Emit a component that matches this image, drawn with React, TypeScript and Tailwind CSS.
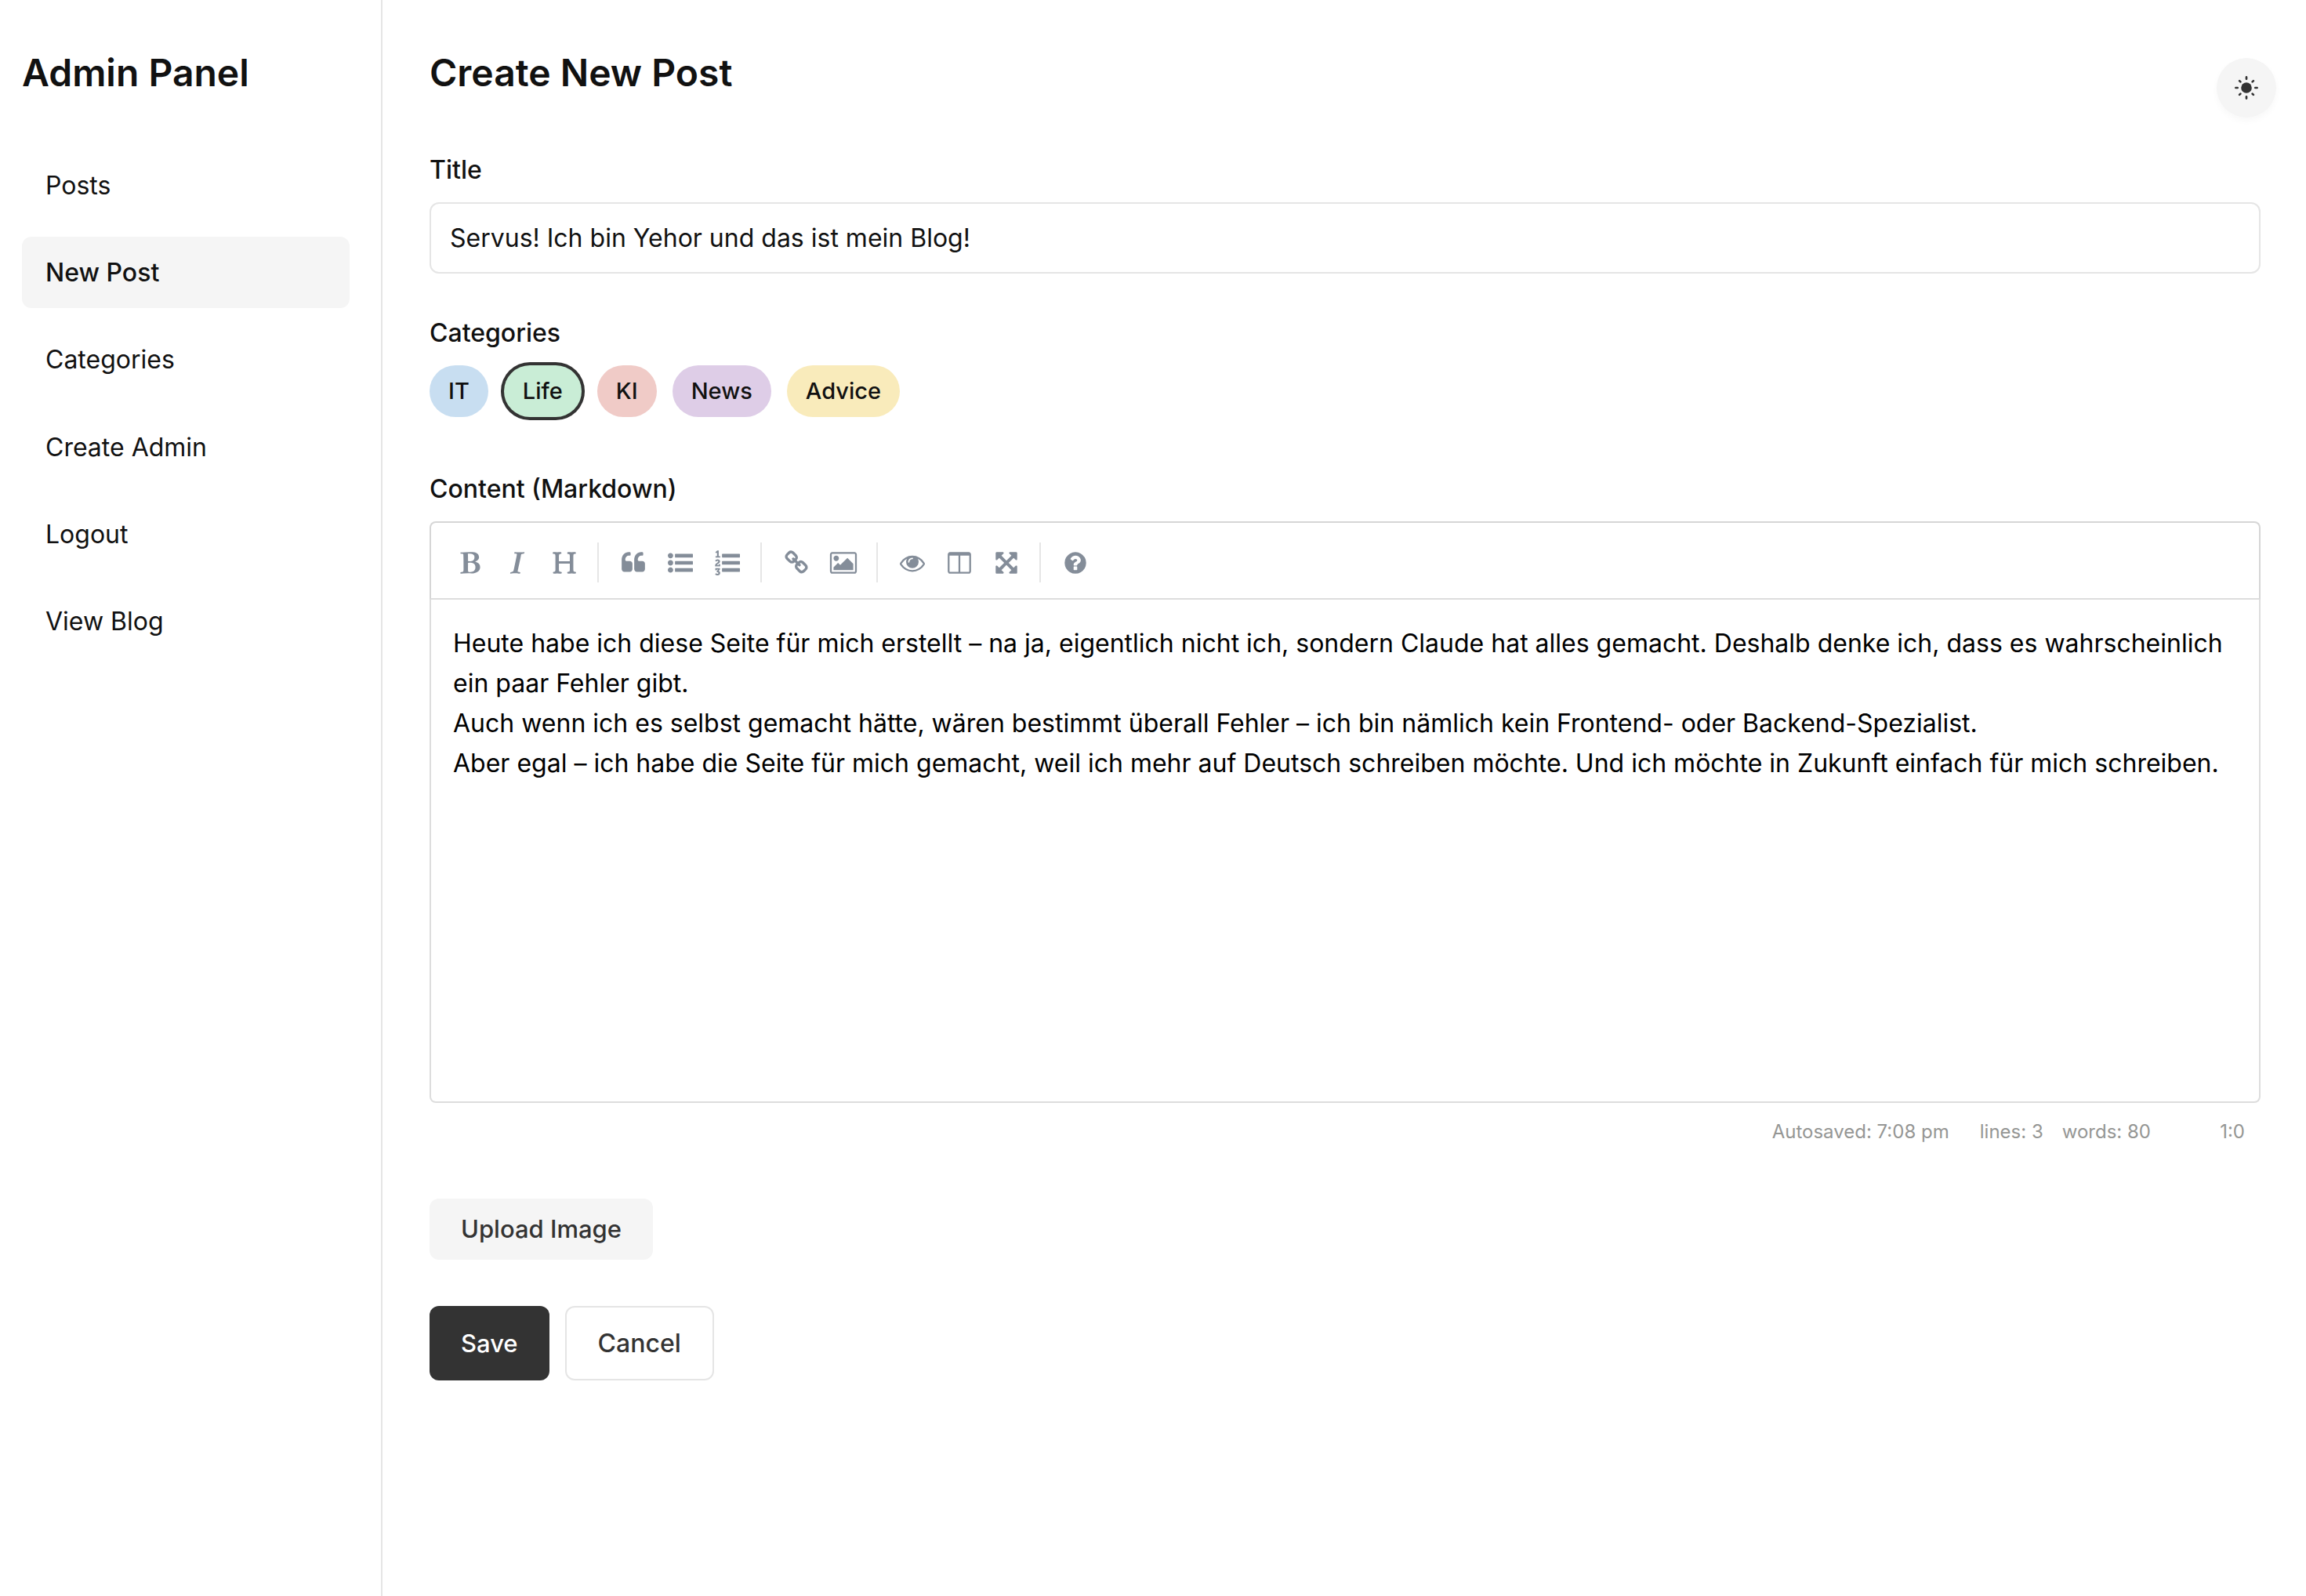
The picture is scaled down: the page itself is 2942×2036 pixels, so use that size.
import { useState, type ReactNode } from "react";

const navItems = ["Posts", "New Post", "Categories", "Create Admin", "Logout", "View Blog"];

const categories = [
  { name: "IT", color: "bg-[#c8def1]" },
  { name: "Life", color: "bg-[#c9edd6]" },
  { name: "KI", color: "bg-[#f0cbc7]" },
  { name: "News", color: "bg-[#decde7]" },
  { name: "Advice", color: "bg-[#f9ebbb]" },
];

const initialContent = [
  "Heute habe ich diese Seite für mich erstellt – na ja, eigentlich nicht ich, sondern Claude hat alles gemacht. Deshalb denke ich, dass es wahrscheinlich ein paar Fehler gibt.",
  "Auch wenn ich es selbst gemacht hätte, wären bestimmt überall Fehler – ich bin nämlich kein Frontend- oder Backend-Spezialist.",
  "Aber egal – ich habe die Seite für mich gemacht, weil ich mehr auf Deutsch schreiben möchte. Und ich möchte in Zukunft einfach für mich schreiben.",
].join("\n");

const icons = {
  bold: "M747 1521q74 32 140 32 376 0 376-335 0-114-41-180-27-44-61.5-74t-67.5-46.5-80.5-25-84-10.5-94.5-2q-73 0-101 10 0 53-.5 159t-.5 158q0 8-1 67.5t-.5 96.5 4.5 83.5 12 66.5zm-14-746q42 7 109 7 82 0 143-13t110-44.5 74.5-89.5 25.5-142q0-70-29-122.5t-79-82-108-43.5-124-14q-50 0-130 13 0 50 4 151t4 152q0 27-.5 80t-.5 79q0 46 1 69zm-541 889l2-94q15-4 85-16t106-27q7-12 12.5-27t8.5-33.5 5.5-32.5 3-37.5.5-34v-65.5q0-982-22-1025-4-8-22-14.5t-44.5-11-49.5-7-48.5-4.5-30.5-3l-4-83q98-2 340-11.5t373-9.5q23 0 68.5.5t67.5.5q70 0 136.5 13t128.5 42 108 71 74 104.5 28 137.5q0 52-16.5 95.5t-39 72-64.5 57.5-73 45-84 40q154 35 256.5 134t102.5 248q0 100-35 179.5t-93.5 130.5-138 85.5-163.5 48.5-176 14q-44 0-132-3t-132-3q-106 0-307 11t-231 12z",
  italic: "M384 1662l17-85q6-2 81.5-21.5t111.5-37.5q28-35 41-101 1-7 62-289t114-543.5 52-296.5v-25q-24-13-54.5-18.5t-69.5-8-58-5.5l19-103q33 2 120 6.5t149.5 7 120.5 2.5q48 0 98.5-2.5t121-7 98.5-6.5q-5 39-19 89-30 10-101.5 28.5t-108.5 33.5q-8 19-14 42.5t-9 40-7.5 45.5-6.5 42q-27 148-87.5 419.5t-77.5 355.5q-2 9-13 58t-20 90-16 83.5-6 57.5l1 18q17 4 185 31-3 44-16 99-11 0-32.5 1.5t-32.5 1.5q-29 0-87-10t-86-10q-138-2-206-2-51 0-143 9t-121 11z",
  heading: "M1682 1664q-44 0-132.5-3.5t-133.5-3.5q-44 0-132 3.5t-132 3.5q-24 0-37-20.5t-13-45.5q0-31 17-46t39-17 51-7 45-15q33-21 33-140l-1-391q0-21-1-31-13-4-50-4h-675q-38 0-51 4-1 10-1 31l-1 371q0 142 37 164 16 10 48 13t57 3.5 45 15 20 45.5q0 26-12.5 48t-36.5 22q-47 0-139.5-3.5t-138.5-3.5q-43 0-128 3.5t-127 3.5q-23 0-35.5-21t-12.5-45q0-30 15.5-45t36-17.5 47.5-7.5 42-15q33-23 33-143l-1-57v-813q0-3 .5-26t0-36.5-1.5-38.5-3.5-42-6.5-36.5-11-31.5-16-18q-15-10-45-12t-53-2-41-14-18-45q0-26 12-48t36-22q46 0 138.5 3.5t138.5 3.5q42 0 126.5-3.5t126.5-3.5q25 0 37.5 22t12.5 48q0 30-17 43.5t-38.5 14.5-49.5 4-43 13q-35 21-35 160l1 320q0 21 1 32 13 3 39 3h699q25 0 38-3 1-11 1-32l1-320q0-139-35-160-18-11-58.5-12.5t-66-13-25.5-49.5q0-26 12.5-48t37.5-22q44 0 132 3.5t132 3.5q43 0 129-3.5t129-3.5q25 0 37.5 22t12.5 48q0 30-17.5 44t-40 14.5-51.5 3-44 12.5q-35 23-35 161l1 943q0 119 34 140 16 10 46 13.5t53.5 4.5 41.5 15.5 18 44.5q0 26-12 48t-36 22z",
  quote: "M832 960v384q0 80-56 136t-136 56h-384q-80 0-136-56t-56-136v-704q0-104 40.5-198.5t109.5-163.5 163.5-109.5 198.5-40.5h64q26 0 45 19t19 45v128q0 26-19 45t-45 19h-64q-106 0-181 75t-75 181v32q0 40 28 68t68 28h224q80 0 136 56t56 136zm896 0v384q0 80-56 136t-136 56h-384q-80 0-136-56t-56-136v-704q0-104 40.5-198.5t109.5-163.5 163.5-109.5 198.5-40.5h64q26 0 45 19t19 45v128q0 26-19 45t-45 19h-64q-106 0-181 75t-75 181v32q0 40 28 68t68 28h224q80 0 136 56t56 136z",
  bullets: "M384 1408q0 80-56 136t-136 56-136-56-56-136 56-136 136-56 136 56 56 136zm0-512q0 80-56 136t-136 56-136-56-56-136 56-136 136-56 136 56 56 136zm1408 416v192q0 13-9.5 22.5t-22.5 9.5h-1216q-13 0-22.5-9.5t-9.5-22.5v-192q0-13 9.5-22.5t22.5-9.5h1216q13 0 22.5 9.5t9.5 22.5zm-1408-928q0 80-56 136t-136 56-136-56-56-136 56-136 136-56 136 56 56 136zm1408 416v192q0 13-9.5 22.5t-22.5 9.5h-1216q-13 0-22.5-9.5t-9.5-22.5v-192q0-13 9.5-22.5t22.5-9.5h1216q13 0 22.5 9.5t9.5 22.5zm0-512v192q0 13-9.5 22.5t-22.5 9.5h-1216q-13 0-22.5-9.5t-9.5-22.5v-192q0-13 9.5-22.5t22.5-9.5h1216q13 0 22.5 9.5t9.5 22.5z",
  numbers: "M381 1620q0 80-54.5 126t-135.5 46q-106 0-172-66l57-88q49 45 106 45 29 0 50.5-14.5t21.5-42.5q0-64-105-56l-26-56q8-10 32.5-43.5t42.5-54 37-38.5v-1q-16 0-48.5 1t-48.5 1v53h-106v-152h333v88l-95 115q51 12 81 49t30 88zm2-627v159h-362q-6-36-6-54 0-51 23.5-93t56.5-68 66-47.5 56.5-43.5 23.5-45q0-25-14.5-38.5t-39.5-13.5q-46 0-81 58l-85-59q24-51 71.5-79.5t105.5-28.5q73 0 123 41.5t50 112.5q0 50-34 91.5t-75 64.5-75.5 50.5-35.5 52.5h127v-60h105zm1409 319v192q0 13-9.5 22.5t-22.5 9.5h-1216q-13 0-22.5-9.5t-9.5-22.5v-192q0-14 9-23t23-9h1216q13 0 22.5 9.5t9.5 22.5zm-1408-899v99h-335v-99h107q0-41 .5-122t.5-121v-12h-2q-8 17-50 54l-71-76 136-127h106v404h108zm1408 387v192q0 13-9.5 22.5t-22.5 9.5h-1216q-13 0-22.5-9.5t-9.5-22.5v-192q0-14 9-23t23-9h1216q13 0 22.5 9.5t9.5 22.5zm0-512v192q0 13-9.5 22.5t-22.5 9.5h-1216q-13 0-22.5-9.5t-9.5-22.5v-192q0-13 9.5-22.5t22.5-9.5h1216q13 0 22.5 9.5t9.5 22.5z",
  link: "M1520 1216q0-40-28-68l-208-208q-28-28-68-28-42 0-72 32 3 3 19 18.5t21.5 21.5 15 19 13 25.5 3.5 27.5q0 40-28 68t-68 28q-15 0-27.5-3.5t-25.5-13-19-15-21.5-21.5-18.5-19q-33 31-33 73 0 40 28 68l206 207q27 27 68 27 40 0 68-26l147-146q28-28 28-67zm-703-705q0-40-28-68l-206-207q-28-28-68-28-39 0-68 27l-147 146q-28 28-28 67 0 40 28 68l208 208q27 27 68 27 42 0 72-31-3-3-19-18.5t-21.5-21.5-15-19-13-25.5-3.5-27.5q0-40 28-68t68-28q15 0 27.5 3.5t25.5 13 19 15 21.5 21.5 18.5 19q33-31 33-73zm895 705q0 120-85 203l-147 146q-83 83-203 83-121 0-204-85l-206-207q-83-83-83-203 0-123 88-209l-88-88q-86 88-208 88-120 0-204-84l-208-208q-84-84-84-204t85-203l147-146q83-83 203-83 121 0 204 85l206 207q83 83 83 203 0 123-88 209l88 88q86-88 208-88 120 0 204 84l208 208q84 84 84 204z",
  image: "M576 576q0 80-56 136t-136 56-136-56-56-136 56-136 136-56 136 56 56 136zm1024 384v448h-1408v-192l320-320 160 160 512-512zm96-704h-1600q-13 0-22.5 9.5t-9.5 22.5v1216q0 13 9.5 22.5t22.5 9.5h1600q13 0 22.5-9.5t9.5-22.5v-1216q0-13-9.5-22.5t-22.5-9.5zm160 32v1216q0 66-47 113t-113 47h-1600q-66 0-113-47t-47-113v-1216q0-66 47-113t113-47h1600q66 0 113 47t47 113z",
  eye: "M1664 960q-152-236-381-353 61 104 61 225 0 185-131.5 316.5t-316.5 131.5-316.5-131.5-131.5-316.5q0-121 61-225-229 117-381 353 133 205 333.5 326.5t434.5 121.5 434.5-121.5 333.5-326.5zm-720-384q0-20-14-34t-34-14q-125 0-214.5 89.5t-89.5 214.5q0 20 14 34t34 14 34-14 14-34q0-86 61-147t147-61q20 0 34-14t14-34zm848 384q0 34-20 69-140 230-376.5 368.5t-499.5 138.5-499.5-139-376.5-368q-20-35-20-69t20-69q140-229 376.5-368t499.5-139 499.5 139 376.5 368q20 35 20 69z",
  columns: "M224 1536h608v-1152h-640v1120q0 13 9.5 22.5t22.5 9.5zm1376-32v-1120h-640v1152h608q13 0 22.5-9.5t9.5-22.5zm128-1216v1216q0 66-47 113t-113 47h-1344q-66 0-113-47t-47-113v-1216q0-66 47-113t113-47h1344q66 0 113 47t47 113z",
  arrows: "M1411 541l-355 355 355 355 144-144q29-31 70-14 39 17 39 59v448q0 26-19 45t-45 19h-448q-42 0-59-40-17-39 14-69l144-144-355-355-355 355 144 144q31 30 14 69-17 40-59 40h-448q-26 0-45-19t-19-45v-448q0-42 40-59 39-17 69 14l144 144 355-355-355-355-144 144q-19 19-45 19-12 0-24-5-40-17-40-59v-448q0-26 19-45t45-19h448q42 0 59 40 17 39-14 69l-144 144 355 355 355-355-144-144q-31-30-14-69 17-40 59-40h448q26 0 45 19t19 45v448q0 42-39 59-13 5-25 5-26 0-45-19z",
  help: "M1024 1376v-192q0-14-9-23t-23-9h-192q-14 0-23 9t-9 23v192q0 14 9 23t23 9h192q14 0 23-9t9-23zm256-672q0-88-55.5-163t-138.5-116-170-41q-243 0-371 213-15 24 8 42l132 100q7 6 19 6 16 0 25-12 53-68 86-92 34-24 86-24 48 0 85.5 26t37.5 59q0 38-20 61t-68 45q-63 28-115.5 86.5t-52.5 125.5v36q0 14 9 23t23 9h192q14 0 23-9t9-23q0-19 21.5-49.5t54.5-49.5q32-18 49-28.5t46-35 44.5-48 28-60.5 12.5-81zm384 192q0 209-103 385.5t-279.5 279.5-385.5 103-385.5-103-279.5-279.5-103-385.5 103-385.5 279.5-279.5 385.5-103 385.5 103 279.5 279.5 103 385.5z",
};

type IconName = keyof typeof icons;

const toolbarGroups: { icon: IconName; label: string }[][] = [
  [
    { icon: "bold", label: "Bold" },
    { icon: "italic", label: "Italic" },
    { icon: "heading", label: "Heading" },
  ],
  [
    { icon: "quote", label: "Quote" },
    { icon: "bullets", label: "Generic List" },
    { icon: "numbers", label: "Numbered List" },
  ],
  [
    { icon: "link", label: "Create Link" },
    { icon: "image", label: "Insert Image" },
  ],
  [
    { icon: "eye", label: "Toggle Preview" },
    { icon: "columns", label: "Toggle Side by Side" },
    { icon: "arrows", label: "Toggle Fullscreen" },
  ],
  [{ icon: "help", label: "Markdown Guide" }],
];

function ToolbarIcon({ name }: { name: IconName }) {
  return (
    <svg viewBox="0 0 1792 1792" className="size-8 overflow-visible fill-current" aria-hidden="true">
      <path d={icons[name]} />
    </svg>
  );
}

function SunIcon() {
  return (
    <svg viewBox="-20 -20 40 40" className="size-10" aria-hidden="true">
      <circle r="6.8" fill="currentColor" />
      <path
        d="M0-13.6V-11.3M0 13.6V11.3M-13.6 0H-11.3M13.6 0H11.3M-8.9-8.9L-7.6-7.6M8.9-8.9L7.6-7.6M-8.9 8.9L-7.6 7.6M8.9 8.9L7.6 7.6"
        stroke="currentColor"
        strokeWidth="2.7"
        strokeLinecap="round"
      />
    </svg>
  );
}

function Sidebar() {
  return (
    <aside className="w-[488px] shrink-0 border-r-2 border-[#e5e5e5] pt-16 pr-10 pl-7">
      <h2 className="text-[48px] leading-[58px] font-semibold">Admin Panel</h2>
      <nav className="mt-[69px] flex flex-col gap-5">
        {navItems.map((item) => (
          <a
            key={item}
            href="#"
            className={
              item === "New Post"
                ? "rounded-xl bg-[#f5f5f5] px-[30px] py-5 font-medium"
                : "rounded-xl px-[30px] py-5"
            }
          >
            {item}
          </a>
        ))}
      </nav>
    </aside>
  );
}

function Toolbar() {
  return (
    <div
      role="toolbar"
      aria-label="Formatting"
      className="flex items-center gap-3 rounded-t-lg border-2 border-[#d6d6d6] border-b-[#dddddd] px-5 pt-[21px] pb-[15px] text-[#848d99]"
    >
      {toolbarGroups.map((group, index) => (
        <div key={group[0].icon} className="flex items-center">
          {index > 0 && <span className="mr-3.5 h-[51px] w-0.5 bg-[#e6e6e6]" />}
          {group.map(({ icon, label }) => (
            <button
              key={icon}
              type="button"
              aria-label={label}
              className="flex size-[60px] items-center justify-center"
            >
              <ToolbarIcon name={icon} />
            </button>
          ))}
        </div>
      ))}
    </div>
  );
}

function Status({ children }: { children: ReactNode }) {
  return <span className="min-w-24 text-right">{children}</span>;
}

export default function App() {
  const [title, setTitle] = useState("Servus! Ich bin Yehor und das ist mein Blog!");
  const [content, setContent] = useState(initialContent);
  const [selected, setSelected] = useState("Life");

  return (
    <div className="flex min-h-screen bg-white font-['Inter',sans-serif] text-[32px] leading-[1.6] text-[#111111]">
      <Sidebar />
      <main className="min-w-0 flex-1 pt-16 pr-[58px] pl-[60px]">
        <h1 className="text-[48px] leading-[58px] font-semibold">Create New Post</h1>

        <form className="mt-[69px]" onSubmit={(e) => e.preventDefault()}>
          <label htmlFor="title" className="block font-medium">
            Title
          </label>
          <input
            id="title"
            type="text"
            value={title}
            onChange={(e) => setTitle(e.target.value)}
            className="mt-4 block w-full rounded-xl border-2 border-[#e5e5e5] px-6 py-6 leading-[39px] outline-none"
          />

          <fieldset className="mt-[50px]">
            <legend className="font-medium">Categories</legend>
            <div className="mt-4 flex gap-5">
              {categories.map(({ name, color }) => (
                <button
                  key={name}
                  type="button"
                  aria-pressed={selected === name}
                  onClick={() => setSelected(name)}
                  className={`rounded-full px-6 py-2.5 text-[29px] leading-[46px] font-medium ${color} ${
                    selected === name ? "ring-4 ring-[#333333]" : ""
                  }`}
                >
                  {name}
                </button>
              ))}
            </div>
          </fieldset>

          <label htmlFor="content" className="mt-[66px] block font-medium">
            Content (Markdown)
          </label>
          <div className="mt-[15px]">
            <Toolbar />
            <textarea
              id="content"
              value={content}
              onChange={(e) => setContent(e.target.value)}
              spellCheck={false}
              className="block h-[642px] w-full resize-none rounded-b-lg border-2 border-t-0 border-[#dddddd] px-7 pt-[30px] pb-7 text-black outline-none"
            />
            <div className="flex justify-end gap-6 px-5 pt-[18px] pb-4 text-2xl leading-[1.6] text-[#959694]">
              <Status>Autosaved: 7:08 pm</Status>
              <Status>lines: 3</Status>
              <Status>words: 80</Status>
              <Status>1:0</Status>
            </div>
          </div>

          <button
            type="button"
            className="mt-[50px] block rounded-xl bg-[#f5f5f5] px-10 py-5 text-[31px] leading-[38px] font-medium text-[#333333]"
          >
            Upload Image
          </button>

          <div className="mt-[59px] flex gap-5">
            <button
              type="submit"
              className="rounded-xl bg-[#333333] px-10 text-[31px] font-medium text-white"
            >
              Save
            </button>
            <a
              href="#"
              className="rounded-xl border-2 border-[#e5e5e5] px-10 py-5 font-medium text-[#333333]"
            >
              Cancel
            </a>
          </div>
        </form>
      </main>

      <button
        type="button"
        aria-label="Toggle theme"
        className="fixed top-[74px] right-[38px] flex size-[76px] items-center justify-center rounded-full bg-[#f5f5f5] text-[#333333] shadow-[0_4px_8px_rgba(0,0,0,0.03)]"
      >
        <SunIcon />
      </button>
    </div>
  );
}
